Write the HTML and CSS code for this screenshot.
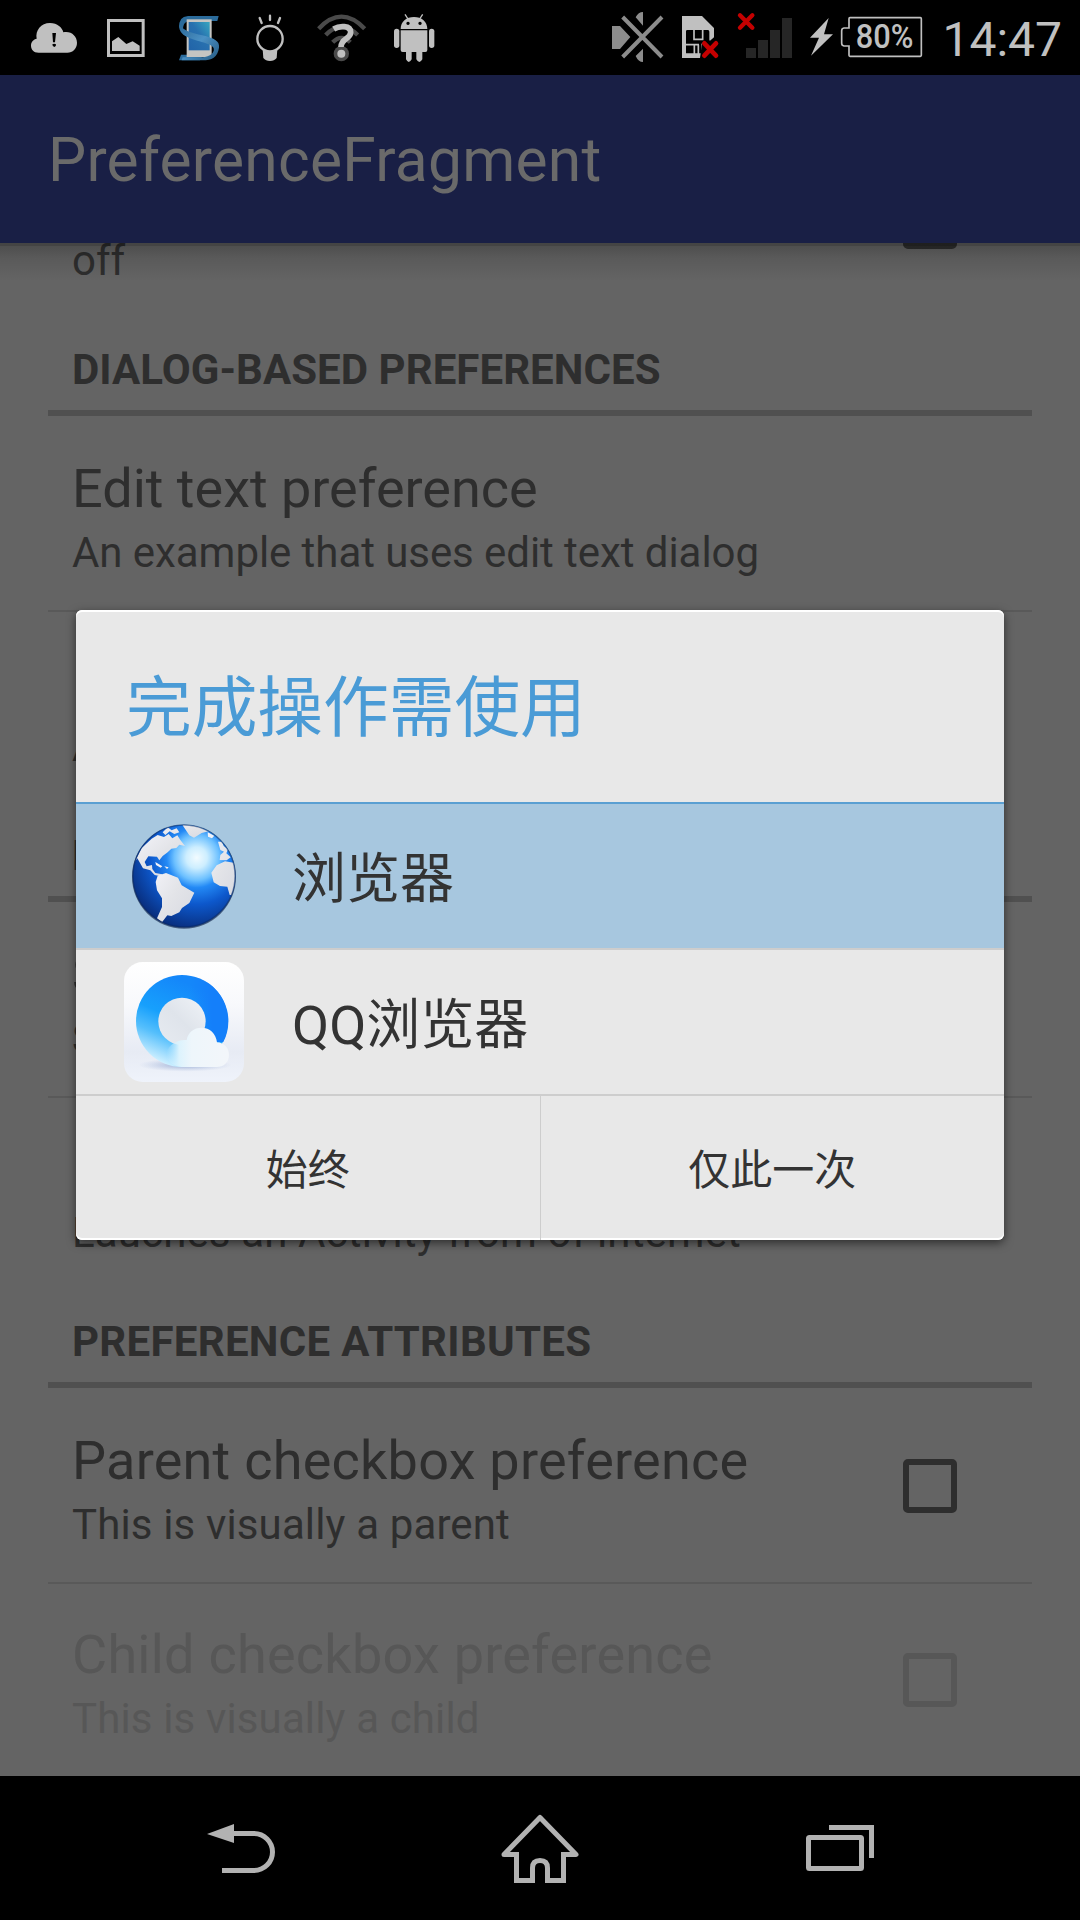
FILE: index.html
```html
<!DOCTYPE html>
<html lang="zh-CN">
<head>
<meta charset="utf-8">
<title>PreferenceFragment</title>
<link rel="stylesheet" href="styles.css">
</head>
<body>
<div class="screen">
  <header class="status">
    <div class="status-group">
      <svg width="92" height="75" viewBox="0 0 276 225" fill="#c0c0c0"><path d="M116 158C100 158 93 147 93 137C93 125 101 118 110 116C105 92 123 69 150 69C172 69 187 83 190 97C213 92 231 108 231 128C231 146 218 158 202 158Z"/><path fill="#000" d="M157 99h11l-3 28h-6zM157 133q5-4 11 0q1 6-5 8q-6-1-6-8"/></svg>
      <svg width="70" height="75" viewBox="276 0 210 225" fill="#c0c0c0"><path fill-rule="evenodd" d="M321 57H434V171H321zM330 66V162H425V66z"/><path d="M336 153V124L355 111L379 132L398 124L419 137V153z"/></svg>
      <svg width="72" height="75" viewBox="486 0 216 225"><defs><linearGradient id="phone" x1="0" y1="1" x2="1" y2="0"><stop offset="0" stop-color="#2163a8"/><stop offset=".55" stop-color="#2871af"/><stop offset="1" stop-color="#36a6c0"/></linearGradient><linearGradient id="ribbon" x1="0" y1="0" x2="1" y2="1"><stop offset="0" stop-color="#2a6795"/><stop offset=".5" stop-color="#4b91c5"/><stop offset="1" stop-color="#24587f"/></linearGradient></defs><path fill="#2b6b9b" d="M656 48H564Q535 50 538 82L549 94Q547 65 567 63H652z"/><path fill="#2b6b9b" d="M537 181L543 164H610L600 181z"/><rect x="560" y="58" width="75" height="113" fill="#c5c5c2"/><rect x="566" y="66" width="63" height="85" fill="url(#phone)"/><path fill="url(#ribbon)" d="M538 72C550 94 576 98 607 106C641 115 660 122 657 143C653 172 635 181 608 181H545L548 172H606C630 172 649 155 639 141C626 126 574 122 550 104C538 94 536 81 538 72z"/></svg>
      <svg width="66" height="75" viewBox="702 0 198 225" fill="none" stroke="#c0c0c0" stroke-width="7"><circle cx="810" cy="116" r="38"/><path fill="#c0c0c0" stroke="none" d="M788 148Q810 160 832 148L830 174Q823 183 810 183Q797 183 790 174z"/><path d="M810 47v13M779 54l6 15M840 54l-6 15" stroke-linecap="round"/></svg>
      <svg width="80" height="75" viewBox="900 0 240 225" fill="none" stroke="#4a4a4a" stroke-width="13"><path d="M956 86Q1024 14 1094 86M977 105Q1024 56 1073 105M998 127Q1024 100 1051 127"/><circle cx="1024" cy="161" r="23" fill="#4a4a4a" stroke="none"/><path stroke="#c0c0c0" stroke-width="17" d="M1001 87C1018 77 1052 75 1052 97C1052 118 1023 114 1023 141"/><circle cx="1024" cy="161" r="12" fill="#c0c0c0" stroke="none"/></svg>
      <svg width="80" height="75" viewBox="1140 0 240 225" fill="#c0c0c0"><path fill-rule="evenodd" d="M1202 87C1202 65 1219 51 1242 51C1265 51 1282 65 1282 87zM1224 65a5 5 0 1 0 .1 0M1260 65a5 5 0 1 0 .1 0"/><path d="M1202 91H1282V150Q1282 156 1276 156H1267V178Q1258 194 1249 178V156H1235V178Q1226 194 1218 178V156H1208Q1202 156 1202 150z"/><rect x="1182" y="86" width="16" height="58" rx="8"/><rect x="1287" y="86" width="16" height="58" rx="8"/><path d="M1215 43l9 14M1268 43l-9 14" stroke="#c0c0c0" stroke-width="4"/></svg>
    </div>
    <div class="status-group">
      <svg width="80" height="75" viewBox="0 0 240 225" fill="#8c8c8c"><path d="M66 78H90L121 111L90 147H66zM137 52Q145 36 159 36V77zM137 168Q145 186 159 186V146z"/><path d="M98 51L216 171M216 51L98 171" stroke="#000" stroke-width="17"/><path d="M98 51L216 171M216 51L98 171" stroke="#8c8c8c" stroke-width="12"/></svg>
      <svg width="60" height="75" viewBox="240 0 180 225"><path fill="#c0c0c0" d="M276 48H336L372 84V112L360 122L348 112L336 130L330 174H276z"/><path fill="#000" d="M292 90H354Q358 90 358 95V120H345L334 132V160H288V94Q288 90 292 90z"/><path fill="none" stroke="#c0c0c0" stroke-width="5" d="M312 90V118H338V90M286 134H327M313 134V162M325 134V162"/><path d="M343 130L378 167M378 130L343 167" stroke="#c40000" stroke-width="14" stroke-linecap="round"/></svg>
      <svg width="73" height="75" viewBox="420 0 219 225"><path fill="#262626" d="M468 144h30v30h-30zM504 120h30v54h-30zM540 90h30v84h-30zM576 54h30v120h-30z"/><path d="M450 46L487 83M487 46L450 83" stroke="#c40000" stroke-width="13" stroke-linecap="round"/></svg>
      <svg width="127" height="75" viewBox="639 0 381 225"><path fill="#c0c0c0" d="M716 54L660 113H687L663 167L729 103H702z"/><path fill="none" stroke="#c0c0c0" stroke-width="5" d="M780 53H991Q994 53 994 56V166Q994 169 991 169H780Q777 169 777 166V138H762Q755 137 755 130V92Q755 85 762 84H777V56Q777 53 780 53z"/><text class="charge" x="884" y="144" textLength="173" lengthAdjust="spacingAndGlyphs">80%</text></svg>
      <span class="clock">14:47</span>
    </div>
  </header>

  <div class="appbar">PreferenceFragment</div>

  <main class="content">
    <div class="list">
      <section class="item"><div><div class="title">Checkbox preference</div><div class="summary">off</div></div><i class="box"></i></section>
      <h2 class="category">DIALOG-BASED PREFERENCES</h2>
      <section class="item"><div><div class="title">Edit text preference</div><div class="summary">An example that uses edit text dialog</div></div></section>
      <section class="item ruled"><div><div class="title">List preference</div><div class="summary">An example that uses list dialog</div></div></section>
      <h2 class="category">LAUNCH PREFERENCES</h2>
      <section class="item"><div><div class="title">Screen preference</div><div class="summary">Shows another screen</div></div></section>
      <section class="item ruled spaced"><div><div class="title">Intent preference</div><div class="summary">Lauches an Activity from of internet</div></div></section>
      <h2 class="category spaced">PREFERENCE ATTRIBUTES</h2>
      <section class="item spaced"><div><div class="title">Parent checkbox preference</div><div class="summary">This is visually a parent</div></div><i class="box"></i></section>
      <section class="item ruled spaced disabled"><div><div class="title">Child checkbox preference</div><div class="summary">This is visually a child</div></div><i class="box"></i></section>
    </div>
  </main>

  <nav class="navbar">
    <svg width="300" height="144" viewBox="90 1776 300 144"><path fill="#b2b2b2" d="M207 1834L234 1824V1843z"/><path fill="none" stroke="#b2b2b2" stroke-width="5" d="M232 1833.5H254A18.5 18.5 0 0 1 254 1870.5H222"/></svg>
    <svg width="300" height="144" viewBox="390 1776 300 144" fill="none" stroke="#b2b2b2" stroke-width="5"><path stroke-linejoin="round" d="M516.500 1854.500H504L540 1817.500L576 1854.500H563.500"/><path d="M516.500 1852V1880.500H532.500V1868Q532.500 1860.500 540 1860.500Q547.500 1860.500 547.500 1868V1880.500H563.500V1852"/></svg>
    <svg width="300" height="144" viewBox="690 1776 300 144" fill="none" stroke="#b2b2b2" stroke-width="5"><rect x="808.500" y="1837.500" width="53" height="31" rx="1"/><path d="M829 1827.500H871.500V1858"/></svg>
  </nav>

  <div class="dialog">
    <div class="dialog-title">完成操作需使用</div>
    <div class="choice selected">
      <svg width="120" height="120" viewBox="192 78 360 360">
        <defs>
          <radialGradient id="sea" gradientUnits="userSpaceOnUse" cx="410" cy="203" r="225"><stop offset="0" stop-color="#f2fbff"/><stop offset=".14" stop-color="#cdeeff"/><stop offset=".3" stop-color="#6cc0ff"/><stop offset=".4" stop-color="#2389f5"/><stop offset=".62" stop-color="#0d58cc"/><stop offset="1" stop-color="#082a76"/></radialGradient>
          <linearGradient id="land" x1="0" y1="0" x2="1" y2="1"><stop offset="0" stop-color="#f4f4fa"/><stop offset=".5" stop-color="#e3e4e8"/><stop offset="1" stop-color="#d7d9e1"/></linearGradient>
          <clipPath id="globe"><circle cx="372" cy="258" r="153"/></clipPath>
        </defs>
        <circle cx="372" cy="260" r="156" fill="#12264d" opacity=".65"/>
        <circle cx="372" cy="258" r="154" fill="url(#sea)"/>
        <g clip-path="url(#globe)" fill="url(#land)">
          <path d="M225 215L245 174L275 146L293 135L312 141L326 132L337 145L352 136L361 150L375 168L358 164L349 174L334 176L323 187L308 198L298 211L291 200L265 199L254 216L260 229L276 225L277 237L286 249L307 253L302 259L284 255L271 241L249 235L232 205z"/>
          <path d="M308 127L323 112L335 121L350 115L358 127L343 132L329 124L316 135zM366 103L437 103L449 123L425 129L402 143L388 136z"/>
          <path d="M443 127L463 137L456 145L444 140zM474 155L486 155L491 168L504 178L499 190L512 202L500 211L479 210L481 195L492 185L481 180zM530 220L495 214L470 226L454 248L461 277L480 288L502 290L509 315L535 315z"/>
          <path d="M293 257L318 249L354 263L365 286L403 308L388 339L366 354L358 367L334 378L322 376L306 397L291 385L306 351L306 325L291 301L287 276zM286 216L307 229L302 233L288 225zM313 229l13 3l-5 5z"/>
        </g>
        <circle cx="372" cy="258" r="153" fill="none" stroke="#0a2859" stroke-opacity=".45" stroke-width="4"/>
      </svg>
      <span>浏览器</span>
    </div>
    <div class="choice">
      <svg width="120" height="120" viewBox="192 516 360 360">
        <defs>
          <linearGradient id="tile" x1="0" y1="0" x2="0" y2="1"><stop offset="0" stop-color="#fff"/><stop offset=".35" stop-color="#f8f9fc"/><stop offset=".75" stop-color="#e7ebf4"/><stop offset="1" stop-color="#eff3fb"/></linearGradient>
          <linearGradient id="ring" gradientUnits="userSpaceOnUse" x1="430" y1="600" x2="330" y2="830"><stop offset="0" stop-color="#1487fa"/><stop offset=".45" stop-color="#17a0fc"/><stop offset=".7" stop-color="#55bffc"/><stop offset="1" stop-color="#d2f1ff"/></linearGradient>
          <linearGradient id="ringside" gradientUnits="userSpaceOnUse" x1="390" y1="0" x2="500" y2="0"><stop offset="0" stop-color="#147ffa" stop-opacity="0"/><stop offset=".6" stop-color="#147ffa"/></linearGradient>
          <linearGradient id="hole" x1="1" y1="0" x2="0" y2="1"><stop offset="0" stop-color="#f0f3f7"/><stop offset=".5" stop-color="#dfe4eb"/><stop offset="1" stop-color="#e7ebf1"/></linearGradient>
          <linearGradient id="cloud" gradientUnits="userSpaceOnUse" x1="507" y1="0" x2="320" y2="0"><stop offset="0" stop-color="#f3f6fa"/><stop offset=".6" stop-color="#eef6fb"/><stop offset=".8" stop-color="#dcf3fd"/><stop offset="1" stop-color="#cdefff" stop-opacity="0"/></linearGradient>
          <radialGradient id="shade"><stop offset="0" stop-color="#819aca" stop-opacity=".8"/><stop offset="1" stop-color="#a9badd" stop-opacity="0"/></radialGradient>
        </defs>
        <rect x="192" y="516" width="360" height="360" rx="56" fill="url(#tile)"/>
        <ellipse cx="375" cy="825" rx="140" ry="20" fill="url(#shade)"/>
        <circle cx="366" cy="693" r="138" fill="url(#ring)"/>
        <path fill="url(#ringside)" d="M390 557A138 138 0 0 1 490 756L420 756L390 690z"/>
        <circle cx="366" cy="694" r="71" fill="url(#hole)"/>
        <path fill="url(#cloud)" d="M366 831Q325 828 315 790C330 760 355 748 380 750C384 727 402 713 424 713C450 713 468 731 471 757C493 758 507 775 507 794C507 817 491 831 470 831z"/>
      </svg>
      <span>QQ浏览器</span>
    </div>
    <div class="actions"><div>始终</div><div>仅此一次</div></div>
  </div>
</div>
</body>
</html>
```
FILE: styles.css
```css
* { box-sizing: border-box; }
body { margin: 0; background: #000; font-family: Roboto, "Noto Sans CJK SC", sans-serif; }
svg { display: block; flex: none; }
.screen { position: relative; width: 1080px; height: 1920px; overflow: hidden; display: flex; flex-direction: column; }

.status { height: 75px; flex: none; display: flex; justify-content: space-between; background: #000; }
.status-group { display: flex; }
.charge { font-size: 97px; font-weight: 500; fill: #c0c0c0; text-anchor: middle; }
.clock { width: 150px; padding: 2px 18px 0 0; text-align: right; font-size: 48px; line-height: 75px; color: #c0c0c0; }

.appbar { height: 168px; flex: none; padding: 4px 48px 0; line-height: 163px; font-size: 60.5px; letter-spacing: .25px; color: #6a6a6a; background: #191f45; }

.content { position: relative; flex: 1; overflow: hidden; background: #646464; }
.content::after { content: ""; position: absolute; inset: 0 0 auto; height: 38px; background: linear-gradient(rgba(0,0,0,.32) 3px, rgba(0,0,0,.22) 3px, rgba(0,0,0,.1) 15px, rgba(0,0,0,0)); }
.list { margin: -117px 48px 0; color: #2e2e2e; }
.item { display: flex; justify-content: space-between; align-items: center; height: 192px; padding: 0 75px 0 24px; white-space: nowrap; }
.ruled { height: 194px; border-top: 2px solid #595959; }
.title { padding-top: 5px; font-size: 54px; line-height: 72px; }
.summary { font-size: 42px; line-height: 56px; letter-spacing: -.06px; }
.category { height: 98px; margin: 0 0 2px; padding: 26px 24px 0; border-bottom: 6px solid #505050; font-size: 42px; line-height: 51px; font-weight: 700; letter-spacing: .05px; white-space: nowrap; }
.spaced .title { letter-spacing: .24px; }
.spaced .summary { letter-spacing: .14px; }
.category.spaced { letter-spacing: .29px; }
.box { width: 54px; height: 54px; border: 6px solid currentColor; border-radius: 5px; }
.disabled { color: #575757; }

.navbar { height: 144px; flex: none; display: flex; justify-content: center; background: #000; }

.dialog { position: absolute; left: 76px; top: 610px; width: 928px; height: 630px; border-radius: 6px; overflow: hidden; background: #e8e8e8; color: #333; box-shadow: 0 3px 10px rgba(0,0,0,.55), inset 0 2px #fff, inset 0 -2px #fff; }
.dialog-title { height: 194px; padding: 4px 50px 0; border-bottom: 2px solid #5a9fd2; line-height: 189px; font-size: 65.7px; color: #4a9bd6; }
.choice { display: flex; align-items: center; gap: 48px; height: 146px; padding: 0 48px; border-bottom: 2px solid #cdcdcd; font-size: 54px; line-height: 72px; }
.choice span { padding-top: 7px; }
.selected { background: #a7c7df; }
.actions { display: flex; height: 144px; font-size: 42px; line-height: 150px; text-align: center; }
.actions div { flex: 1; }
.actions div + div { border-left: 1px solid #cdcdcd; }
```
